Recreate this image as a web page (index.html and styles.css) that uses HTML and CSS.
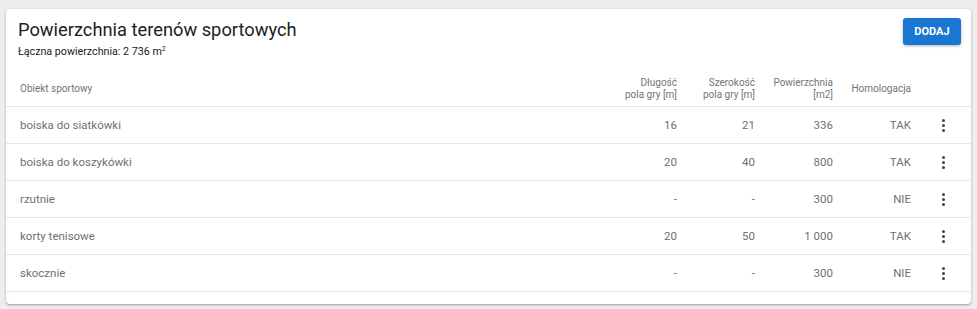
FILE: index.html
```html
<!DOCTYPE html>
<html lang="pl">
<head>
<meta charset="utf-8">
<title>Powierzchnia terenów sportowych</title>
<link rel="stylesheet" href="styles.css">
</head>
<body>
<div class="card">
  <div class="card-head">
    <div class="titles">
      <h1 class="title">Powierzchnia terenów sportowych</h1>
      <div class="subtitle">Łączna powierzchnia: 2 736 m<sup>2</sup></div>
    </div>
    <button class="btn">DODAJ</button>
  </div>
  <div class="table">
    <div class="row head">
      <div class="cell first">Obiekt sportowy</div>
      <div class="cell num">Długość<br>pola gry [m]</div>
      <div class="cell num">Szerokość<br>pola gry [m]</div>
      <div class="cell num">Powierzchnia<br>[m2]</div>
      <div class="cell num">Homologacja</div>
      <div class="cell act"></div>
    </div>
    <div class="row">
      <div class="cell first">boiska do siatkówki</div>
      <div class="cell num">16</div>
      <div class="cell num">21</div>
      <div class="cell num">336</div>
      <div class="cell num">TAK</div>
      <div class="cell act"><span class="kebab"><i></i><i></i><i></i></span></div>
    </div>
    <div class="row">
      <div class="cell first">boiska do koszykówki</div>
      <div class="cell num">20</div>
      <div class="cell num">40</div>
      <div class="cell num">800</div>
      <div class="cell num">TAK</div>
      <div class="cell act"><span class="kebab"><i></i><i></i><i></i></span></div>
    </div>
    <div class="row">
      <div class="cell first">rzutnie</div>
      <div class="cell num">-</div>
      <div class="cell num">-</div>
      <div class="cell num">300</div>
      <div class="cell num">NIE</div>
      <div class="cell act"><span class="kebab"><i></i><i></i><i></i></span></div>
    </div>
    <div class="row">
      <div class="cell first">korty tenisowe</div>
      <div class="cell num">20</div>
      <div class="cell num">50</div>
      <div class="cell num">1 000</div>
      <div class="cell num">TAK</div>
      <div class="cell act"><span class="kebab"><i></i><i></i><i></i></span></div>
    </div>
    <div class="row">
      <div class="cell first">skocznie</div>
      <div class="cell num">-</div>
      <div class="cell num">-</div>
      <div class="cell num">300</div>
      <div class="cell num">NIE</div>
      <div class="cell act"><span class="kebab"><i></i><i></i><i></i></span></div>
    </div>
  </div>
</div>
</body>
</html>
```

FILE: styles.css
```css
html, body {
  margin: 0;
  padding: 0;
  background: #eeeeee;
}
body {
  padding: 9px 6px 5px 6px;
  font-family: Roboto, "Liberation Sans", Arial, sans-serif;
}
.card {
  background: #fff;
  border-radius: 4px;
  box-shadow: 0 1px 3px rgba(0,0,0,0.25), 0 1px 1px rgba(0,0,0,0.12);
  padding-bottom: 12px;
}
.card-head {
  display: flex;
  justify-content: space-between;
  align-items: flex-start;
  padding: 9px 10px 0 12px;
}
.title {
  margin: 0;
  font-size: 18.3px;
  font-weight: 400;
  line-height: 24px;
  color: #212121;
}
.subtitle {
  font-size: 10.7px;
  line-height: 14px;
  color: #212121;
  margin-top: 3px;
}
.subtitle sup {
  font-size: 7px;
  vertical-align: top;
  line-height: 8px;
}
.btn {
  margin-top: 0;
  width: 58px;
  height: 27px;
  border: none;
  border-radius: 3px;
  background: #1976d2;
  color: #fff;
  font-family: Roboto, "Liberation Sans", Arial, sans-serif;
  font-weight: 700;
  font-size: 11px;
  box-shadow: 0 1px 3px rgba(0,0,0,0.3);
  padding: 0;
}
.table {
  margin-top: 12px;
}
.row {
  display: grid;
  grid-template-columns: 1fr 78px 78px 78px 78px 60px;
  padding-left: 14px;
  height: 36px;
  align-items: center;
  border-bottom: 1px solid #e6e6e6;
  font-size: 11.5px;
  color: #707070;
}
.row.head {
  font-size: 10px;
  line-height: 12px;
  color: #757575;
  font-weight: 400;
  height: 35px;
}
.cell.num {
  text-align: right;
}
.cell.act {
  display: flex;
  justify-content: center;
  padding-left: 4px;
}
.kebab {
  display: flex;
  flex-direction: column;
  gap: 2px;
}
.kebab i {
  display: block;
  width: 3px;
  height: 3px;
  border-radius: 50%;
  background: #424242;
}
```
